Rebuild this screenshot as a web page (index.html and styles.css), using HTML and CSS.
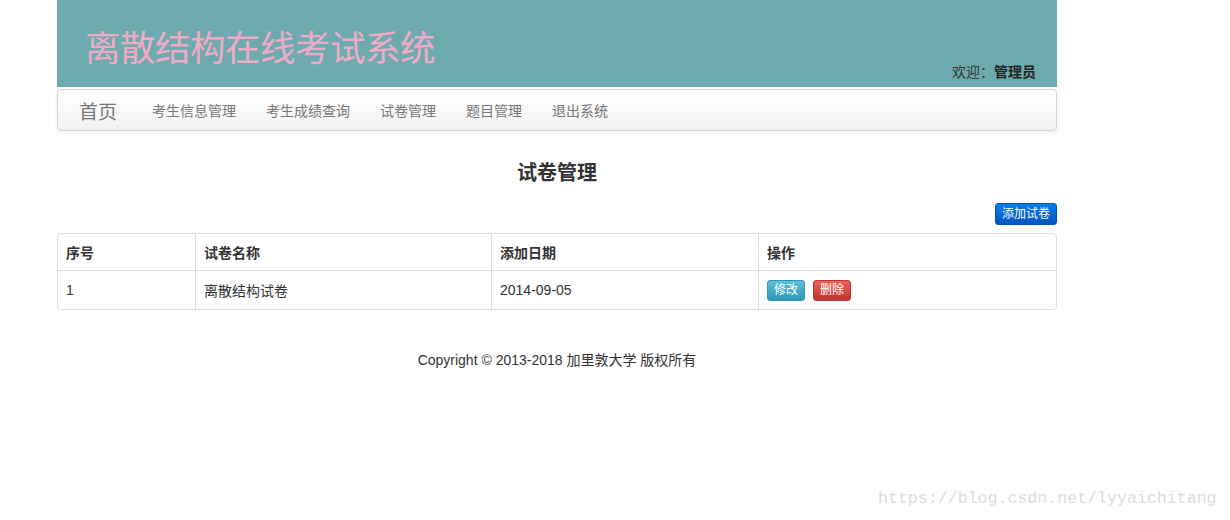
FILE: index.html
```html
<!DOCTYPE html>
<html>
<head>
<meta charset="utf-8">
<link rel="stylesheet" href="styles.css">
</head>
<body>
<div class="wrap">
  <header class="banner">
    <h1 class="site-title">离散结构在线考试系统</h1>
    <div class="welcome">欢迎：<b>管理员</b></div>
  </header>
  <nav class="navbar">
    <a class="brand">首页</a>
    <a class="nav-item">考生信息管理</a>
    <a class="nav-item">考生成绩查询</a>
    <a class="nav-item">试卷管理</a>
    <a class="nav-item">题目管理</a>
    <a class="nav-item">退出系统</a>
  </nav>
  <h2 class="page-title">试卷管理</h2>
  <div class="toolbar"><button class="btn btn-primary">添加试卷</button></div>
  <table class="grid">
    <thead>
      <tr><th class="c1">序号</th><th class="c2">试卷名称</th><th class="c3">添加日期</th><th>操作</th></tr>
    </thead>
    <tbody>
      <tr><td>1</td><td>离散结构试卷</td><td>2014-09-05</td><td><button class="btn btn-info">修改</button><button class="btn btn-danger">删除</button></td></tr>
    </tbody>
  </table>
  <footer class="footer">Copyright © 2013-2018 加里敦大学 版权所有</footer>
</div>
<div class="watermark">https://blog.csdn.net/lyyaichitang</div>
</body>
</html>
```
FILE: styles.css
```css
html, body { margin: 0; padding: 0; background: #fff; }
body { font-family: "Liberation Sans", Arial, "Noto Sans CJK SC", sans-serif; font-size: 14px; color: #333; }
.wrap { width: 1000px; margin-left: 57px; }
.banner { height: 87px; background: #6caaad; display: flex; justify-content: space-between; align-items: flex-end; box-sizing: border-box; padding: 0 21px 5px 28px; }
.site-title { margin: 0 0 11px; font-weight: normal; font-size: 35.5px; color: #f1abc9; letter-spacing: -0.5px; line-height: 44px; }
.welcome { font-size: 14px; color: #333; line-height: 20px; }
.welcome b { font-weight: bold; color: #222; }
.navbar { margin-top: 2px; height: 42px; box-sizing: border-box; border: 1px solid #d4d4d4; border-radius: 4px; background: linear-gradient(#ffffff, #f2f2f2); box-shadow: 0 1px 4px rgba(0,0,0,0.065); display: flex; align-items: center; padding-left: 21px; }
.navbar a { color: #777; text-decoration: none; }
.brand { font-size: 19px; margin-right: 35px; }
.nav-item { font-size: 14px; margin-right: 30px; }
.page-title { margin: 30px 0 0; text-align: center; font-size: 20px; font-weight: bold; line-height: 24px; color: #333; }
.toolbar { display: flex; justify-content: flex-end; margin-top: 18px; }
.btn { border: 1px solid; border-radius: 3px; color: #fff; font-family: inherit; font-size: 12px; line-height: 16px; padding: 2px 6px; cursor: pointer; }
.btn-primary { background: linear-gradient(#0a7de6, #0055c4); border-color: #0055b8; height: 22px; width: 62px; padding: 0; }
.btn-info { background: linear-gradient(#5bc0de, #2f96b4); border-color: #2f96b4; height: 21px; width: 38px; padding: 0; margin-right: 8px; }
.btn-danger { background: linear-gradient(#ee5f5b, #bd362f); border-color: #bd362f; height: 21px; width: 38px; padding: 0; }
.grid { margin-top: 8px; width: 1000px; border: 1px solid #ddd; border-collapse: separate; border-spacing: 0; border-radius: 4px; }
.grid th, .grid td { text-align: left; padding: 0 8px; border-left: 1px solid #ddd; }
.grid th:first-child, .grid td:first-child { border-left: none; }
.grid th { height: 36px; font-weight: bold; color: #333; }
.grid td { height: 38px; border-top: 1px solid #ddd; color: #333; }
.c1 { width: 121px; }
.c2 { width: 279px; }
.c3 { width: 250px; }
.footer { text-align: center; margin-top: 40px; line-height: 20px; font-size: 14px; color: #333; }
.watermark { position: absolute; left: 878px; top: 489px; font-family: "Liberation Mono", monospace; font-size: 16.6px; color: #dcdcdc; }
```
